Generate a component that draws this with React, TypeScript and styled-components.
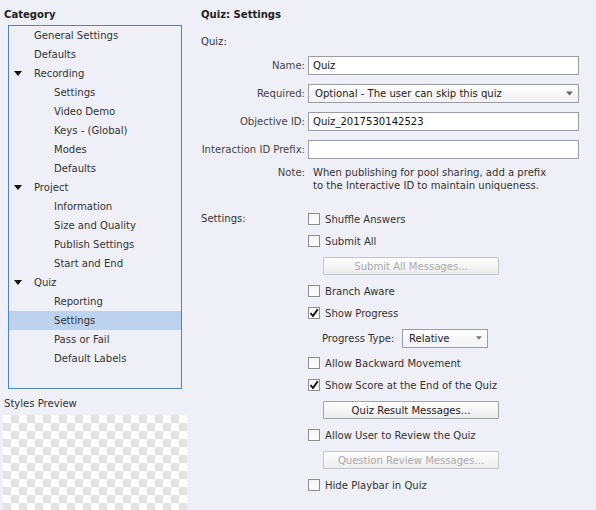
import styled, { createGlobalStyle } from 'styled-components'

const GlobalStyle = createGlobalStyle`
  html, body {
    margin: 0;
    padding: 0;
    background: #eff0f7;
  }
  body {
    font-family: "DejaVu Sans Condensed", "DejaVu Sans", sans-serif;
    font-size: 11.2px;
    color: #333;
  }
`

const Page = styled.div`
    display: flex;
    height: 510px;
    overflow: hidden;
`

// * left side: category tree
const LeftPane = styled.div`
    width: 190px;
    display: flex;
    flex-direction: column;
    padding-top: 5px;
    box-sizing: border-box;
`

const PaneTitle = styled.div<{ $flush?: boolean }>`
    font-weight: bold;
    line-height: 19px;
    color: #222;
    padding-left: ${props => (props.$flush ? 0 : 4)}px;
`

const TreeBox = styled.ul`
    list-style: none;
    margin: 1px 0 0 8px;
    padding: 0;
    width: 174px;
    height: 364px;
    border: 1px solid #4a86bf;
    box-sizing: border-box;
`

const TreeRow = styled.li<{ $level: number; $selected?: boolean }>`
    display: flex;
    align-items: center;
    height: 19px;
    padding-left: ${props => 5 + props.$level * 20}px;
    background: ${props => (props.$selected ? '#bdd3ed' : 'transparent')};
    color: #333;
`

const Toggle = styled.span`
    width: 20px;
    display: flex;
    align-items: center;
`

const PreviewLabel = styled.div`
    line-height: 19px;
    padding-left: 4px;
    margin-top: 5px;
    color: #333;
`

const Checker = styled.div`
    margin: 2px 0 0 3px;
    width: 184px;
    flex: 1;
    background: repeating-conic-gradient(#e2e2e2 0 25%, #ffffff 0 50%) 0 0 / 16px 16px;
`

// * right side: settings form
const RightPane = styled.div`
    flex: 1;
    padding: 5px 0 0 11px;
`

const SectionLabel = styled.div<{ $gap?: number }>`
    line-height: 19px;
    margin-top: ${props => props.$gap || 0}px;
    color: #333;
`

const FieldGrid = styled.div`
    display: grid;
    grid-template-columns: 104px 271px;
    column-gap: 3px;
    row-gap: 9px;
    align-items: center;
    margin-top: 5px;
`

const FieldLabel = styled.div<{ $top?: boolean }>`
    text-align: right;
    color: #444;
    white-space: nowrap;
    align-self: ${props => (props.$top ? 'start' : 'center')};
    line-height: ${props => (props.$top ? '13px' : 'normal')};
    margin-top: ${props => (props.$top ? '-2px' : '0')};
`

const TextBox = styled.div`
    height: 19px;
    box-sizing: border-box;
    border: 1px solid #9a9cab;
    background: #fff;
    padding-left: 4px;
    line-height: 17px;
    color: #111;
`

const SelectBox = styled.div<{ $width?: number }>`
    display: flex;
    align-items: center;
    justify-content: space-between;
    height: 19px;
    width: ${props => (props.$width ? props.$width + 'px' : 'auto')};
    box-sizing: border-box;
    border: 1px solid #9a9cab;
    background: linear-gradient(#ffffff, #f2f2f4);
    padding: 0 5px 0 6px;
    color: #222;
`

const NoteText = styled.div`
    line-height: 13px;
    padding-left: 5px;
    margin-top: -2px;
    color: #333;
`

const SettingsGrid = styled.div`
    display: grid;
    grid-template-columns: 107px 1fr;
    margin-top: 16px;
`

const SettingsLabel = styled.div`
    line-height: 22px;
    color: #333;
`

const OptionList = styled.div`
    display: flex;
    flex-direction: column;
`

const CheckRow = styled.label`
    display: flex;
    align-items: center;
    gap: 5px;
    height: 22px;
    color: #333;
`

const Box = styled.span`
    width: 12px;
    height: 12px;
    box-sizing: border-box;
    border: 1px solid #8d8d8d;
    background: linear-gradient(#f4f4f4, #ffffff);
    display: flex;
    align-items: center;
    justify-content: center;
`

const ButtonRow = styled.div`
    height: 28px;
    padding: 5px 0 0 15px;
    box-sizing: border-box;
`

const MsgButton = styled.button<{ $disabled?: boolean }>`
    width: 176px;
    height: 18px;
    padding: 0;
    border: 1px solid ${props => (props.$disabled ? '#c6c6c8' : '#a4a4a8')};
    border-radius: 1px;
    background: linear-gradient(#fefefe, #ececee);
    font: inherit;
    color: ${props => (props.$disabled ? '#ababab' : '#222')};
`

const ProgressRow = styled.div`
    display: flex;
    align-items: center;
    height: 28px;
    padding-left: 14px;
    color: #333;
`

const ProgressLabel = styled.span`
    width: 80px;
`

const Arrow = ({ size = 7, color = '#111' }: { size?: number; color?: string }) => (
    <svg width={size} height={Math.ceil(size * 0.6)} viewBox="0 0 10 6">
        <path d="M0 0 L10 0 L5 6 Z" fill={color} />
    </svg>
)

const Tick = () => (
    <svg width="10" height="10" viewBox="0 0 10 10">
        <path d="M1.5 5 L4 8 L8.8 1.2" fill="none" stroke="#111" strokeWidth="1.9" />
    </svg>
)

interface TreeItem {
    label: string
    level: number
    group?: boolean
    selected?: boolean
}

const tree: TreeItem[] = [
    { label: 'General Settings', level: 0 },
    { label: 'Defaults', level: 0 },
    { label: 'Recording', level: 0, group: true },
    { label: 'Settings', level: 1 },
    { label: 'Video Demo', level: 1 },
    { label: 'Keys - (Global)', level: 1 },
    { label: 'Modes', level: 1 },
    { label: 'Defaults', level: 1 },
    { label: 'Project', level: 0, group: true },
    { label: 'Information', level: 1 },
    { label: 'Size and Quality', level: 1 },
    { label: 'Publish Settings', level: 1 },
    { label: 'Start and End', level: 1 },
    { label: 'Quiz', level: 0, group: true },
    { label: 'Reporting', level: 1 },
    { label: 'Settings', level: 1, selected: true },
    { label: 'Pass or Fail', level: 1 },
    { label: 'Default Labels', level: 1 },
]

const Check = ({ label, checked }: { label: string; checked?: boolean }) => (
    <CheckRow>
        <Box>{checked && <Tick />}</Box>
        {label}
    </CheckRow>
)

const App = () => {
    return <Page>
        <GlobalStyle />
        <LeftPane>
            <PaneTitle>Category</PaneTitle>
            <TreeBox>
                {
                    tree.map((item, i) => {
                        return <TreeRow key={i} $level={item.group ? 0 : item.level} $selected={item.selected}>
                            <Toggle>{item.group && <Arrow size={8} />}</Toggle>
                            {item.label}
                        </TreeRow>
                    })
                }
            </TreeBox>
            <PreviewLabel>Styles Preview</PreviewLabel>
            <Checker />
        </LeftPane>
        <RightPane>
            <PaneTitle $flush>Quiz: Settings</PaneTitle>
            <SectionLabel $gap={8}>Quiz:</SectionLabel>
            <FieldGrid>
                <FieldLabel>Name:</FieldLabel>
                <TextBox>Quiz</TextBox>
                <FieldLabel>Required:</FieldLabel>
                <SelectBox>
                    Optional - The user can skip this quiz
                    <Arrow size={7} color="#666" />
                </SelectBox>
                <FieldLabel>Objective ID:</FieldLabel>
                <TextBox>Quiz_2017530142523</TextBox>
                <FieldLabel>Interaction ID Prefix:</FieldLabel>
                <TextBox />
                <FieldLabel $top>Note:</FieldLabel>
                <NoteText>
                    When publishing for pool sharing, add a prefix<br />
                    to the Interactive ID to maintain uniqueness.
                </NoteText>
            </FieldGrid>
            <SettingsGrid>
                <SettingsLabel>Settings:</SettingsLabel>
                <OptionList>
                    <Check label="Shuffle Answers" />
                    <Check label="Submit All" />
                    <ButtonRow><MsgButton $disabled>Submit All Messages...</MsgButton></ButtonRow>
                    <Check label="Branch Aware" />
                    <Check label="Show Progress" checked />
                    <ProgressRow>
                        <ProgressLabel>Progress Type:</ProgressLabel>
                        <SelectBox $width={86}>
                            Relative
                            <Arrow size={6} color="#777" />
                        </SelectBox>
                    </ProgressRow>
                    <Check label="Allow Backward Movement" />
                    <Check label="Show Score at the End of the Quiz" checked />
                    <ButtonRow><MsgButton>Quiz Result Messages...</MsgButton></ButtonRow>
                    <Check label="Allow User to Review the Quiz" />
                    <ButtonRow><MsgButton $disabled>Question Review Messages...</MsgButton></ButtonRow>
                    <Check label="Hide Playbar in Quiz" />
                </OptionList>
            </SettingsGrid>
        </RightPane>
    </Page>
}

export default App
